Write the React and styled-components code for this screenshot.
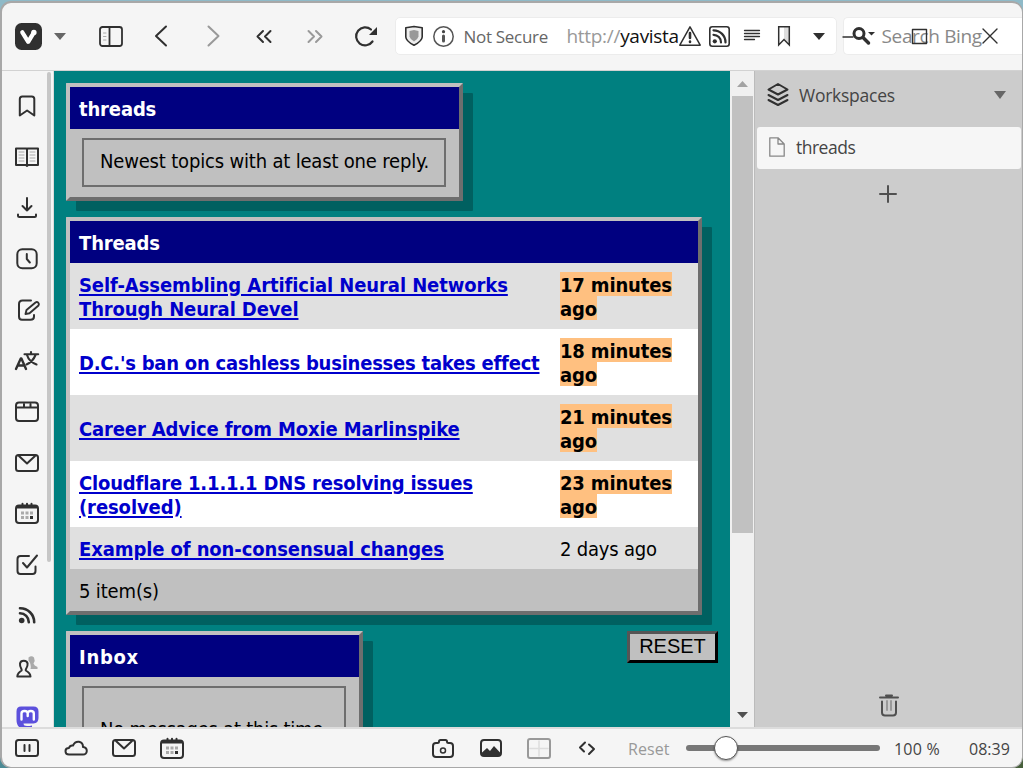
import React from 'react';
import styled, { createGlobalStyle } from 'styled-components';

const ui = '"Open Sans", "Noto Sans", sans-serif';
const page = '"DejaVu Sans Condensed", "DejaVu Sans", sans-serif';
const ink = '#303030';

const Global = createGlobalStyle`
  *, *::before, *::after { box-sizing: border-box; }
  html, body { margin: 0; height: 100%; }
  body { overflow: hidden; background: linear-gradient(#8fbac8, #4b8a95); font-family: ${ui}; }
`;

const Desktop = styled.div`
  width: 1023px; height: 768px; padding: 1px 0 0 0;
  background: linear-gradient(90deg, #8fbac8 0%, #8fbac8 100%) top / 100% 50% no-repeat,
    linear-gradient(90deg, #4b8a95 0 50%, #47603c 50%) bottom / 100% 50% no-repeat;
`;
const Window = styled.div`
  position: relative;
  display: flex; flex-direction: column;
  width: 1023px; height: 767px; overflow: hidden;
  border: solid #a8a8a8; border-width: 2px 1px 1px 2px;
  border-radius: 11px; background: #f5f5f5;
`;
const Toolbar = styled.header`
  display: flex; align-items: center; flex: none;
  height: 68px; padding-bottom: 1px; border-bottom: 1px solid #d2d2d2;
`;
const Slot = styled.span`
  display: flex; align-items: center; justify-content: center; flex: none;
  width: ${p => p.$w || 51}px; height: ${p => p.$h || 51}px;
`;
const Glyph = styled.svg`
  display: block; flex: none; overflow: visible; fill: none;
  stroke: ${p => p.$c || ink}; stroke-width: ${p => p.$s || 2};
  stroke-linecap: round; stroke-linejoin: round;
`;
const Solid = styled(Glyph)`fill: ${p => p.$c || ink}; stroke: none;`;

const Address = styled.div`
  display: flex; align-items: center; flex: none;
  width: 442px; height: 38px; margin-left: 3px; padding-left: 9px;
  background: #fff; border: 1px solid #ececec; border-radius: 5px;
`;
const Security = styled.span`
  width: 103px; font-size: 17px; letter-spacing: -0.3px; color: #666; white-space: nowrap;
`;
const Url = styled.span`
  width: 112px; white-space: nowrap; font-size: 19px; line-height: 28px;
  letter-spacing: -0.3px; color: #111;
  i { font-style: normal; color: #999; }
`;
const Search = styled.div`
  display: flex; align-items: center; flex: 1;
  height: 38px; margin-left: 6px; padding-left: 8px;
  background: #fff; border: 1px solid #ececec; border-right: 0; border-radius: 5px 0 0 5px;
  font-size: 19px; letter-spacing: -0.35px; color: #888; white-space: nowrap;
`;
const SearchLabel = styled.span`margin-left: 7px; line-height: 28px;`;
const Caption = styled.div`
  position: absolute; top: 25px; right: 24px; display: flex; align-items: center; gap: 55px;
`;

const Middle = styled.div`display: flex; height: 656px; flex: none;`;
const SideBar = styled.nav`
  display: flex; justify-content: space-between; flex: none;
  width: 52px; overflow: hidden; background: #f5f5f5; border-right: 1px solid #dcdcdc;
`;
const SideIcons = styled.div`display: flex; flex-direction: column; padding: 9px 0 0 0; width: 45px;`;
const SideSlot = styled(Slot)`width: 50px; height: 51px;`;
const SideThumb = styled.div`
  width: 4px; height: 490px; margin: 1px 2px 0 0; border-radius: 2px; background: #c6c6c6; flex: none;
`;

const Page = styled.main`
  width: 676px; flex: none; overflow: hidden; padding: 12px 12px 0;
  background: #008080; font: 20px/24px ${page}; color: #000;
`;
const Card = styled.section`
  width: ${p => p.$w}px; height: ${p => p.$h}px; margin-bottom: 16px;
  background: #c0c0c0; border: 4px solid;
  border-color: #c0c0c0 #6e6e6e #6e6e6e #c0c0c0;
  border-radius: 1px; box-shadow: 10px 10px 0 rgba(0, 0, 0, 0.25);
`;
const CardTitle = styled.h2`
  margin: 0; height: 42px; padding: 1px 9px 0; background: #000080; color: #fff;
  font-size: 20px; font-weight: 700; line-height: 43px; letter-spacing: ${p => p.$ls || -0.15}px;
`;
const Well = styled.div`
  height: ${p => p.$h || 49}px; margin: 9px 13px 0 12px; padding: ${p => p.$pt}px 0 0 16px;
  border: 2px solid #6e6e6e; white-space: nowrap; letter-spacing: ${p => p.$ls || 0}px;
`;
const Row = styled.div`
  display: flex; align-items: center; padding: 9px;
  background: ${p => (p.$alt ? '#fff' : '#e0e0e0')};
`;
const Topic = styled.a`
  width: 481px; flex: none; font-weight: 700; color: #0000cc; white-space: nowrap;
`;
const Line = styled.span`
  display: block; width: max-content; height: 24px; line-height: 26px;
  letter-spacing: ${p => p.$ls}px;
  text-decoration: underline; text-decoration-thickness: 2px; text-underline-offset: 2px;
`;
const Age = styled.div`white-space: nowrap; letter-spacing: -0.2px; padding-top: ${p => (p.$old ? 1 : 0)}px; height: ${p => (p.$old ? '24px' : 'auto')};`;
const Fresh = styled.strong`
  display: block; width: max-content; height: 24px; line-height: 26px;
  background: #ffc080; letter-spacing: -0.15px;
`;
const Count = styled.div`padding: 10px 9px; letter-spacing: -0.15px;`;
const Bottom = styled.div`display: flex; justify-content: space-between; align-items: flex-start;`;
const ResetButton = styled.button`
  width: 91px; height: 32px; padding: 0 0 2px; background: #c0c0c0; color: #000;
  border: 3px solid; border-color: #555 #000 #000 #555;
  font: 20px/22px "Liberation Sans", Arial, sans-serif;
`;

const ScrollBar = styled.div`
  display: flex; flex-direction: column; align-items: center; flex: none; width: 25px; background: #f0f0f0;
  border-right: 1px solid #bbb;
`;
const ScrollArrow = styled(Slot)`width: 24px; height: 25px;`;
const ScrollThumb = styled.div`width: 21px; height: 437px; background: #c1c1c1; margin-bottom: auto;`;

const Panel = styled.aside`
  flex: 1; display: flex; flex-direction: column; background: #cccccc; color: #444;
`;
const PanelHead = styled.div`
  display: flex; align-items: center; height: 47px; padding: 0 16px 0 12px; margin-bottom: 9px;
  font-size: 17.5px; letter-spacing: -0.25px;
  span { flex: 1; margin-left: 10px; }
`;
const Tab = styled.div`
  display: flex; align-items: center; height: 42px; margin: 0 1px 0 2px; padding: 0 0 2px 12px;
  background: #f6f6f6; border-radius: 3px; font-size: 17.5px; letter-spacing: -0.5px; gap: 11px;
`;
const Center = styled.div`display: flex; justify-content: center; padding-top: 16px; padding-right: 1px;`;
const Trash = styled(Center)`margin-top: auto; padding: 0 0 10px;`;

const Status = styled.footer`
  display: flex; align-items: center; flex: 1; border-top: 2px solid #dcdcdc; color: #444;
  font-size: 16px; white-space: nowrap;
`;
const StatusText = styled.span`padding-top: 2px;`;
const Group = styled.div`display: flex; width: ${p => p.$w}px; flex: none;`;
const ResetText = styled(StatusText)`width: 58px; margin-left: 17px; color: #999; letter-spacing: 0.1px;`;
const Track = styled.div`
  display: flex; align-items: center; width: 194px; height: 6px; padding-left: 28px;
  border-radius: 3px; background: #777; flex: none;
`;
const Knob = styled.div`
  width: 24px; height: 24px; flex: none; border-radius: 50%; background: #fff; border: 1px solid #555;
  box-shadow: 0 1px 2px rgba(0, 0, 0, 0.4);
`;
const Zoom = styled(StatusText)`width: 75px; margin-left: 14px; letter-spacing: 0.2px;`;

const Svg = ({ w, h, c, s, solid, children }) => {
  const C = solid ? Solid : Glyph;
  return <C width={w} height={h} viewBox={`0 0 ${w} ${h}`} $c={c} $s={s}>{children}</C>;
};
const Caret = ({ w = 12, h = 7, c = '#666', up }) => (
  <Svg w={w} h={h} c={c} solid><path d={up ? `M0 ${h}H${w}L${w / 2} 0Z` : `M0 0H${w}L${w / 2} ${h}Z`} /></Svg>
);
const Mail = () => <Svg w={24} h={18}><rect x="1" y="1" width="22" height="16" rx="2.500" /><path d="M4 2L12 9.500L20 2" /></Svg>;
const Calendar = () => (
  <Svg w={24} h={21}>
    <rect x="1" y="2.500" width="22" height="17.500" rx="3" />
    <path d="M2 4H22" strokeWidth="3" strokeLinecap="butt" />
    <path d="M7.500 0.800V2M12 0.800V2M16.500 0.800V2" />
    <g stroke="none" fill="#aaa">
      <rect x="6" y="8.500" width="3" height="3" /><rect x="10.500" y="8.500" width="3" height="3" /><rect x="15" y="8.500" width="3" height="3" />
      <rect x="6" y="13" width="3" height="3" /><rect x="10.500" y="13" width="3" height="3" /><rect x="15" y="13" width="3" height="3" fill={ink} />
    </g>
  </Svg>
);
const Feed = () => (
  <Svg w={18} h={17} s={2.6}>
    <circle cx="3.700" cy="13.500" r="2.800" fill={ink} stroke="none" />
    <path d="M2 6.200A9 9 0 0 1 10.800 15.200M2 1.200A14 14 0 0 1 16.200 15.200" />
  </Svg>
);

const sideIcons = [
  <Svg w={18} h={22}><path d="M1.800 20.500V4Q1.800 1.500 4.300 1.500H13.800Q16.300 1.500 16.300 4V20.500L9.100 15.500Z" /></Svg>,
  <Svg w={24} h={20}>
    <path d="M1 1.500H11L12 2L13 1.500H23V18H13L12 19L11 18H1ZM12 2V19" />
    <path d="M4 5H9M4 8H9M4 11H9M4 14H9M15 5H20M15 8H20M15 11H20M15 14H20" stroke="#aaa" strokeWidth="1" />
  </Svg>,
  <Svg w={20} h={21}><path d="M10 1V13.500M5.500 9L10 13.500L14.500 9M1 17.500V18.500Q1 20 2.500 20H17.500Q19 20 19 18.500V17.500" /></Svg>,
  <Svg w={22} h={21}><rect x="1.300" y="1.300" width="19.400" height="19" rx="5" /><path d="M10.800 6V11L13.800 14.500" /></Svg>,
  <Svg w={20} h={22}><path d="M14 1.500H5.500Q2 1.500 2 5V17.500Q2 20.800 5 20.800H13.500Q17 20.800 17 17.500V16" /><path d="M8.500 15L9.500 11L18.500 3.500Q20 2.500 21.200 3.700Q22.500 5 21.500 6.500L12.500 14.300Z" strokeWidth="1.900" /></Svg>,
  <Svg w={24} h={19}><path d="M1 18L5.800 7.500H6.400L11 18M2.600 14.500H9.500" strokeWidth="2.400" /><path d="M9.500 3.200H23.200M16 1V3M12 4Q14 10.500 21.500 13.500M20.500 4Q18 10.500 11.500 13.500" strokeWidth="2.100" /></Svg>,
  <Svg w={24} h={20}><rect x="1" y="0.500" width="22" height="18.500" rx="3" /><path d="M2 5.500H22M9 2V5M15.500 2V5" /></Svg>,
  <Mail />, <Calendar />,
  <Svg w={22} h={21}><path d="M13 2H4.500Q1.500 2 1.500 5V17Q1.500 20 4.500 20H16.500Q19.500 20 19.500 17V12.500M7 9L11 13.500L21 1.500" /></Svg>,
  <Feed />,
  <Svg w={22} h={22}>
    <path d="M12.500 1.500Q15.500 -0.800 18 1.500Q19.500 4.500 17.500 7.500Q18 9.500 21.500 11V13H14.500Q15.500 8 12.500 4.500Z" fill="#aaa" stroke="none" />
    <path d="M5.600 13.500Q3.600 10 4 7.500Q4.600 4.800 7.800 4.800Q11.100 4.800 11.600 7.500Q12 10 9.800 13.500V14.500Q14.300 17 14.500 20.500H1.300Q1.500 17 5.600 14.500Z" />
  </Svg>,
  <Svg w={23} h={23} solid>
    <path d="M5 0.500H17.500Q22.500 0.500 22.500 5.500V12Q22.500 17 17.500 17.500H7.500Q7.500 20 11 20Q14 20 16 19.500V22Q12 23.500 8 23Q0.500 22 0.500 14V5.500Q0.500 0.500 5 0.500Z" fill="#5c50dc" />
    <path d="M5.500 13.500V7.500Q5.500 5 8.500 5Q11.700 5 11.700 7.500V10V7.500Q11.700 5 14.800 5Q17.800 5 17.800 7.500V13.500" fill="none" stroke="#fff" strokeWidth="2.400" />
  </Svg>,
];

const threads = [
  { lines: [['Self-Assembling Artificial Neural Networks', -0.09], ['Through Neural Devel', -0.12]], age: ['17 minutes', 'ago'] },
  { lines: [["D.C.'s ban on cashless businesses takes effect", -0.23]], age: ['18 minutes', 'ago'] },
  { lines: [['Career Advice from Moxie Marlinspike', -0.14]], age: ['21 minutes', 'ago'] },
  { lines: [['Cloudflare 1.1.1.1 DNS resolving issues', -0.17], ['(resolved)', -0.1]], age: ['23 minutes', 'ago'] },
  { lines: [['Example of non-consensual changes', -0.1]], old: '2 days ago' },
];

export default function App() {
  return (
    <Desktop>
      <Global />
      <Window>
        <Toolbar>
          <Slot $w={52}>
            <Svg w={27} h={27} solid>
              <rect width="27" height="27" rx="6.500" />
              <path d="M7.300 9.300L13.200 18.800L18.900 9.300" fill="none" stroke="#fff" strokeWidth="4.200" />
              <path d="M11.500 8.500Q13.500 14 16.500 8.500Z" />
              <circle cx="18.900" cy="9.500" r="2.700" fill="#fff" />
            </Svg>
          </Slot>
          <Slot $w={11}><Caret /></Slot>
          <Slot $w={20.5} />
          <Slot>
            <Svg w={24} h={21} s={1.8}>
              <rect x="1" y="1" width="22" height="19" rx="2.500" /><path d="M10.500 1V20" />
              <path d="M4.500 7H7M4.500 10.500H7M4.500 14H7" stroke="#aaa" strokeWidth="1" />
            </Svg>
          </Slot>
          <Slot><Svg w={14} h={20}><path d="M11 0.500L1 10L11 19.500" /></Svg></Slot>
          <Slot><Svg w={10} h={20} c="#999"><path d="M0.500 0.500L10.500 10L0.500 19.500" /></Svg></Slot>
          <Slot><Svg w={16} h={13}><path d="M7 1L1.500 6.500L7 12M14.500 1L9 6.500L14.500 12" /></Svg></Slot>
          <Slot><Svg w={16} h={13} c="#999"><path d="M1.500 1L7 6.500L1.500 12M9 1L14.500 6.500L9 12" /></Svg></Slot>
          <Slot>
            <Svg w={22} h={21} s={2.2}>
              <path d="M17.500 15.500A9 9 0 1 1 16 3.500" />
              <path d="M22 1V9H14Z" fill={ink} stroke="none" />
            </Svg>
          </Slot>
          <Address>
            <Svg w={18} h={20} s={1.6}>
              <path d="M0.800 1.800L9 0.500L17.200 1.800V11Q17 15 9 19.300Q1 15 0.800 11Z" fill="#eee" />
              <path d="M4.500 5L9 4L13.500 5V10.500Q13 13 9 15.500Q5 13 4.500 10.500Z" fill="#999" stroke="none" />
            </Svg>
            <Slot $w={41} $h={30}>
              <Svg w={21} h={21} s={1.5} c="#555">
                <circle cx="10.500" cy="10.500" r="9.700" />
                <circle cx="10.500" cy="5.700" r="1.600" fill="#444" stroke="none" /><path d="M10.500 10V15" strokeWidth="3" />
              </Svg>
            </Slot>
            <Security>Not Secure</Security>
            <Url><i>http://</i>yavista</Url>
            <Svg w={22} h={20} s={1.5}><path d="M11 0.800L21.200 19.200H0.800Z" fill="#fff" /><path d="M11 7V12M11 15.500V16" strokeWidth="2.600" /></Svg>
            <Slot $w={37} $h={30}>
              <Svg w={21} h={21} s={1.6}>
                <rect x="0.800" y="0.800" width="19.400" height="19.400" rx="2.500" />
                <circle cx="5.800" cy="15.300" r="2.100" fill={ink} stroke="none" />
                <path d="M4.500 8.800A7.500 7.500 0 0 1 12 16.500M4.500 4.300A12 12 0 0 1 16.500 16.500" strokeWidth="2.200" />
              </Svg>
            </Slot>
            <Slot $w={28} $h={30}><Svg w={16} h={12} s={1.3}><path d="M0.500 0.500H15.500M0.500 3.500H15.500M0.500 6.500H15.500M0.500 9.500H10.500" /></Svg></Slot>
            <Slot $w={36} $h={30}>
              <Svg w={12} h={20} s={1.5}><path d="M6 1H11.500V18L6 13Z" fill="#ddd" stroke="none" /><path d="M0.700 0.800H11.300V19L6 13.500L0.700 19Z" strokeLinejoin="miter" /></Svg>
            </Slot>
            <Slot $w={34} $h={30}><Caret c={ink} /></Slot>
          </Address>
          <Search>
            <Svg w={23} h={18}>
              <circle cx="7" cy="6.500" r="5" strokeWidth="3" /><path d="M11 10.500L16.500 16" strokeWidth="3.500" />
              <path d="M16 5H23L19.500 8.500Z" fill={ink} stroke="none" />
            </Svg>
            <SearchLabel>Search Bing</SearchLabel>
          </Search>
          <Caption>
            <Svg w={15} h={16} s={1.4}><path d="M1 9H11" /></Svg>
            <Svg w={15} h={15} s={1.4}><path d="M0.500 0.500H14.500V14.500H0.500Z" /></Svg>
            <Svg w={16} h={16} s={1.4}><path d="M1 1L15 15M15 1L1 15" /></Svg>
          </Caption>
        </Toolbar>

        <Middle>
          <SideBar>
            <SideIcons>{sideIcons.map((icon, i) => <SideSlot key={i}>{icon}</SideSlot>)}</SideIcons>
            <SideThumb />
          </SideBar>

          <Page>
            <Card $w={397} $h={118}>
              <CardTitle>threads</CardTitle>
              <Well $pt={9} $ls={-0.18}>Newest topics with at least one reply.</Well>
            </Card>
            <Card $w={636} $h={398}>
              <CardTitle>Threads</CardTitle>
              {threads.map((t, i) => (
                <Row key={i} $alt={i % 2 === 1}>
                  <Topic>{t.lines.map(([text, ls]) => <Line key={text} $ls={ls}>{text}</Line>)}</Topic>
                  <Age $old={!!t.old}>{t.old || t.age.map(part => <Fresh key={part}>{part}</Fresh>)}</Age>
                </Row>
              ))}
              <Count>5 item(s)</Count>
            </Card>
            <Bottom>
              <Card $w={297} $h={180}>
                <CardTitle $ls={0.7}>Inbox</CardTitle>
                <Well $pt={29} $h={120} $ls={-0.25}>No messages at this time.</Well>
              </Card>
              <ResetButton>RESET</ResetButton>
            </Bottom>
          </Page>

          <ScrollBar>
            <ScrollArrow><Caret w={11} h={6} c="#a3a3a3" up /></ScrollArrow>
            <ScrollThumb />
            <ScrollArrow><Caret w={11} h={6} c="#505050" /></ScrollArrow>
          </ScrollBar>

          <Panel>
            <PanelHead>
              <Svg w={22} h={24}>
                <path d="M11 1L20.500 6.500L11 11.500L1.500 6.500Z" />
                <path d="M1.500 12L11 17L20.500 12M1.500 17L11 22L20.500 17" />
              </Svg>
              <span>Workspaces</span>
              <Caret w={12} h={8} />
            </PanelHead>
            <Tab>
              <Svg w={16} h={20} s={1.3} c="#888"><path d="M0.800 0.800H9L15.200 7V19.200H0.800ZM9 0.800V7H15.200" /></Svg>
              <span>threads</span>
            </Tab>
            <Center><Svg w={18} h={18} c="#505050"><path d="M9 1V17M1 9H17" /></Svg></Center>
            <Trash>
              <Svg w={20} h={23} c="#505050">
                <path d="M1 3.500H19M7 1.500H13" /><path d="M3 7.500V18.500Q3 21.500 6 21.500H14Q17 21.500 17 18.500V7.500" />
                <path d="M8 7V16M12 7V16" stroke="#999" />
              </Svg>
            </Trash>
          </Panel>
        </Middle>

        <Status>
          <Group $w={417}>
            <Slot $w={50} $h={36}><Svg w={24} h={18}><rect x="1" y="1" width="22" height="16" rx="2.500" /><path d="M9.500 6V12M14.500 6V12" /></Svg></Slot>
            <Slot $w={48} $h={36}><Svg w={24} h={16}><path d="M5 14.500Q1.500 14.500 1.500 11Q1.500 8 5 8Q6 5 9 5.500Q11 1.200 15 1.800Q19 2.500 19 7Q22.800 7.500 22.800 11Q22.500 14.500 19 14.500Z" /></Svg></Slot>
            <Slot $w={48} $h={36}><Mail /></Slot>
            <Slot $w={48} $h={36}><Calendar /></Slot>
          </Group>
          <Group $w={192}>
            <Slot $w={48} $h={36}><Svg w={22} h={19}><path d="M1 7Q1 4 4 4H5.500Q7 4 7 2.500Q7 1 8.500 1H13.500Q15 1 15 2.500Q15 4 16.500 4H18Q21 4 21 7V15Q21 18 18 18H4Q1 18 1 15Z" /><circle cx="11" cy="11.500" r="2.500" strokeWidth="1.500" /></Svg></Slot>
            <Slot $w={48} $h={36}><Svg w={22} h={18}><rect x="1" y="1" width="20" height="16" rx="3" /><path d="M1.500 14L7 9L10 12L14 7L20.500 14V16.500H1.500Z" fill={ink} stroke="none" /></Svg></Slot>
            <Slot $w={48} $h={36}><Svg w={24} h={21} c="#999"><rect x="1" y="1" width="22" height="19" rx="2" /><path d="M12 3V18M3 10.500H21" stroke="#ddd" strokeWidth="1.500" /></Svg></Slot>
            <Slot $w={48} $h={36}><Svg w={16} h={14}><path d="M6 1.500L1 6.500L5 10.500M10 3.500L15 8L10 13" /></Svg></Slot>
          </Group>
          <ResetText>Reset</ResetText>
          <Track><Knob /></Track>
          <Zoom>100 %</Zoom>
          <StatusText>08:39</StatusText>
        </Status>
      </Window>
    </Desktop>
  );
}
